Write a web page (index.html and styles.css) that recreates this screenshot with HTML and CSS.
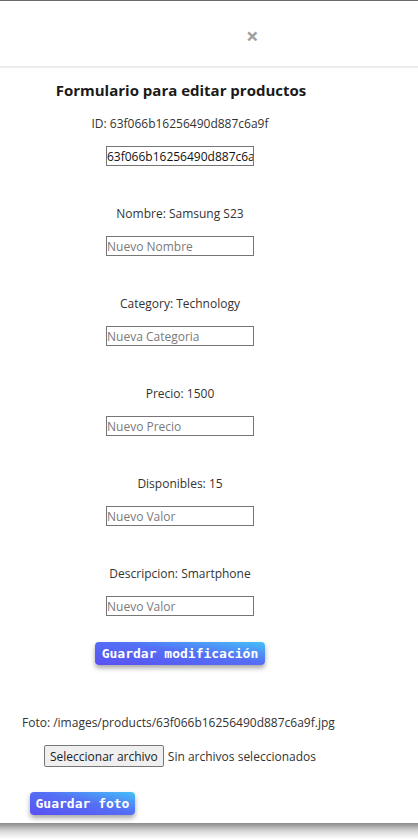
FILE: index.html
```html
<!DOCTYPE html>
<html lang="es">
<head>
<meta charset="utf-8">
<link rel="stylesheet" href="styles.css">
</head>
<body>
<div class="modal">
  <div class="modal-header">
    <span class="close">&times;</span>
  </div>
  <div class="modal-body">
    <h2 class="title">Formulario para editar productos</h2>
    <form class="form">
      <div class="group first">
        <p class="label">ID: 63f066b16256490d887c6a9f</p>
        <input class="field" type="text" value="63f066b16256490d887c6a9f">
      </div>
      <div class="group">
        <p class="label">Nombre: Samsung S23</p>
        <input class="field" type="text" placeholder="Nuevo Nombre">
      </div>
      <div class="group">
        <p class="label">Category: Technology</p>
        <input class="field" type="text" placeholder="Nueva Categoria">
      </div>
      <div class="group">
        <p class="label">Precio: 1500</p>
        <input class="field" type="text" placeholder="Nuevo Precio">
      </div>
      <div class="group">
        <p class="label">Disponibles: 15</p>
        <input class="field" type="text" placeholder="Nuevo Valor">
      </div>
      <div class="group">
        <p class="label">Descripcion: Smartphone</p>
        <input class="field" type="text" placeholder="Nuevo Valor">
      </div>
      <button class="btn btn-mod" type="button">Guardar modificación</button>
    </form>
    <div class="photo">
      <p class="photo-path">Foto: /images/products/63f066b16256490d887c6a9f.jpg</p>
      <div class="file-row">
        <span class="file-btn">Seleccionar archivo</span>
        <span class="file-text">Sin archivos seleccionados</span>
      </div>
      <button class="btn btn-photo" type="button">Guardar foto</button>
    </div>
  </div>
</div>
<div class="shadow"></div>
</body>
</html>
```

FILE: styles.css
```css
html, body {
  margin: 0;
  padding: 0;
  background: #fff;
}
body {
  font-family: "Open Sans", "Noto Sans", sans-serif;
  color: #222;
}
.modal {
  border-top: 1px solid #6a6a6a;
  background: #fff;
}
.modal-header {
  height: 67px;
  border-bottom: 2px solid #ececec;
  display: flex;
  align-items: center;
  padding-left: 246px;
  box-sizing: border-box;
}
.close {
  color: #a0a0a0;
  font-size: 22px;
  font-weight: 700;
  line-height: 1;
  margin-top: 2px;
}
.modal-body {
  height: 755px;
  box-sizing: border-box;
}
.title {
  margin: 0;
  padding-top: 12px;
  width: 362px;
  text-align: center;
  font-size: 15px;
  font-weight: 700;
  line-height: 21px;
  color: #1a1a1a;
}
.form {
  width: 360px;
  display: flex;
  flex-direction: column;
  align-items: center;
}
.group {
  display: flex;
  flex-direction: column;
  align-items: center;
  margin-top: 39px;
}
.group.first {
  margin-top: 14px;
}
.label {
  margin: 0 0 14px 0;
  font-size: 12px;
  line-height: 17px;
  color: #333;
}
.field {
  width: 148px;
  height: 20px;
  box-sizing: border-box;
  border: 1px solid #767676;
  border-radius: 0;
  padding: 0;
  margin: 0;
  font-family: "Open Sans", "Noto Sans", sans-serif;
  font-size: 12px;
  color: #111;
  outline: none;
}
.field::placeholder {
  color: #7a7a7a;
}
.btn {
  font-family: "DejaVu Sans Mono", "Liberation Mono", monospace;
  font-weight: 700;
  font-size: 13px;
  color: #fff;
  border: none;
  border-radius: 4px;
  background: linear-gradient(to top right, #5a4ff2 0%, #5470f5 55%, #45c0f8 100%);
  box-shadow: 0 3px 5px rgba(0, 0, 0, 0.35);
  height: 23px;
  padding: 0 3px;
  cursor: pointer;
}
.btn-mod {
  margin-top: 26px;
  width: 170px;
}
.photo {
  padding-top: 49px;
}
.photo-path {
  margin: 0 0 0 22px;
  font-size: 12px;
  line-height: 17px;
  color: #333;
}
.file-row {
  display: flex;
  align-items: center;
  margin: 14px 0 0 44px;
  font-size: 12px;
}
.file-btn {
  border: 1px solid #767676;
  background: #efefef;
  border-radius: 2px;
  height: 22px;
  box-sizing: border-box;
  padding: 0 5px;
  display: flex;
  align-items: center;
  color: #222;
}
.file-text {
  margin-left: 4px;
  color: #333;
}
.btn-photo {
  margin: 25px 0 0 30px;
  width: 105px;
}
.shadow {
  height: 16px;
  background: linear-gradient(to bottom, #8a8a8a 0%, #d8d8d8 50%, #fff 100%);
}
```
